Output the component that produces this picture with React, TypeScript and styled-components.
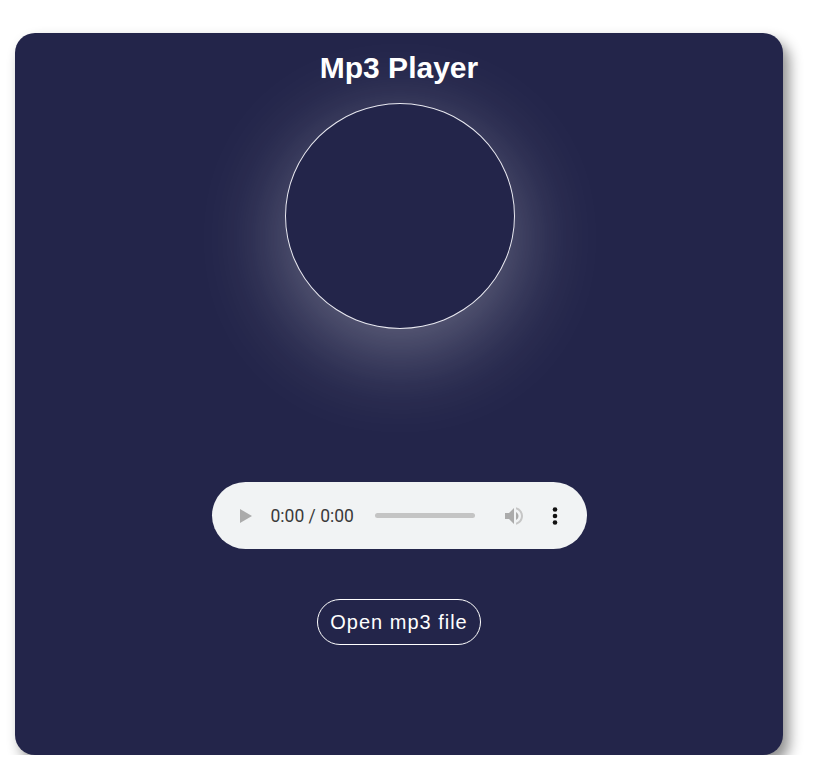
import { createGlobalStyle, styled } from 'styled-components'

const Global = createGlobalStyle`
  html, body {
    margin: 0;
    padding: 0;
    background: #ffffff;
  }
  body {
    font-family: 'Liberation Sans', Arial, sans-serif;
  }
`

const Page = styled.div`
  padding: 33px 0 0 15px;
`

const Card = styled.div`
  width: 768px;
  height: 722px;
  box-sizing: border-box;
  background: #23254a;
  border-radius: 20px;
  box-shadow: 6px 8px 14px rgba(0, 0, 0, 0.45);
  display: flex;
  flex-direction: column;
  align-items: center;
  padding-top: 17px;
`

const Title = styled.h1`
  margin: 0;
  color: #ffffff;
  font-size: 30px;
  font-weight: 700;
  line-height: 36px;
`

const Disc = styled.div`
  margin-top: 17px;
  margin-left: 2px;
  width: 228px;
  height: 224px;
  border-radius: 50%;
  border: 1px solid #e8e8f0;
  background: #23254a;
  box-shadow: 0 22px 90px rgba(255, 255, 255, 0.34);
`

const Audio = styled.div`
  margin-top: 153px;
  width: 375px;
  height: 67px;
  border-radius: 34px;
  background: #f1f3f4;
  display: flex;
  align-items: center;
  box-sizing: border-box;
  padding: 0 0 0 28px;
`

const PlayIcon = styled.div`
  width: 0;
  height: 0;
  border-top: 7.5px solid transparent;
  border-bottom: 7.5px solid transparent;
  border-left: 12px solid #ababab;
`

const Time = styled.span`
  margin-left: 19px;
  font-family: Roboto, 'Liberation Sans', sans-serif;
  font-size: 17.5px;
  color: #3a3a3a;
  white-space: nowrap;
`

const Track = styled.div`
  margin-left: 21px;
  width: 100px;
  height: 5px;
  border-radius: 3px;
  background: #c4c4c4;
`

const IconSlot = styled.div<{ $gap: number }>`
  margin-left: ${(p) => p.$gap}px;
  display: flex;
  align-items: center;
`

const OpenButton = styled.button`
  margin-top: 50px;
  width: 164px;
  height: 46px;
  border-radius: 23px;
  border: 1px solid #ffffff;
  background: transparent;
  color: #ffffff;
  font-family: 'Liberation Sans', Arial, sans-serif;
  font-size: 20px;
  letter-spacing: 1px;
  padding: 0;
  cursor: pointer;
`

function VolumeIcon() {
  return (
    <svg width='24' height='24' viewBox='0 0 24 24'>
      <path
        fill='#ababab'
        d='M3 9v6h4l5 5V4L7 9H3zm13.5 3c0-1.77-1.02-3.29-2.5-4.03v8.05c1.48-.73 2.5-2.25 2.5-4.02z'
      />
      <path
        fill='#c6c6c6'
        d='M14 3.23v2.06c2.89.86 5 3.54 5 6.71s-2.11 5.85-5 6.71v2.06c4.01-.91 7-4.49 7-8.77s-2.99-7.86-7-8.77z'
      />
    </svg>
  )
}

function MoreIcon() {
  return (
    <svg width='6' height='18' viewBox='0 0 6 18'>
      <circle cx='3' cy='2.5' r='2.3' fill='#111' />
      <circle cx='3' cy='9' r='2.3' fill='#111' />
      <circle cx='3' cy='15.5' r='2.3' fill='#111' />
    </svg>
  )
}

function App() {
  return (
    <Page>
      <Global />
      <Card>
        <Title>Mp3 Player</Title>
        <Disc />
        <Audio>
          <PlayIcon />
          <Time>0:00 / 0:00</Time>
          <Track />
          <IconSlot $gap={27}>
            <VolumeIcon />
          </IconSlot>
          <IconSlot $gap={26}>
            <MoreIcon />
          </IconSlot>
        </Audio>
        <OpenButton>Open mp3 file</OpenButton>
      </Card>
    </Page>
  )
}

export default App
